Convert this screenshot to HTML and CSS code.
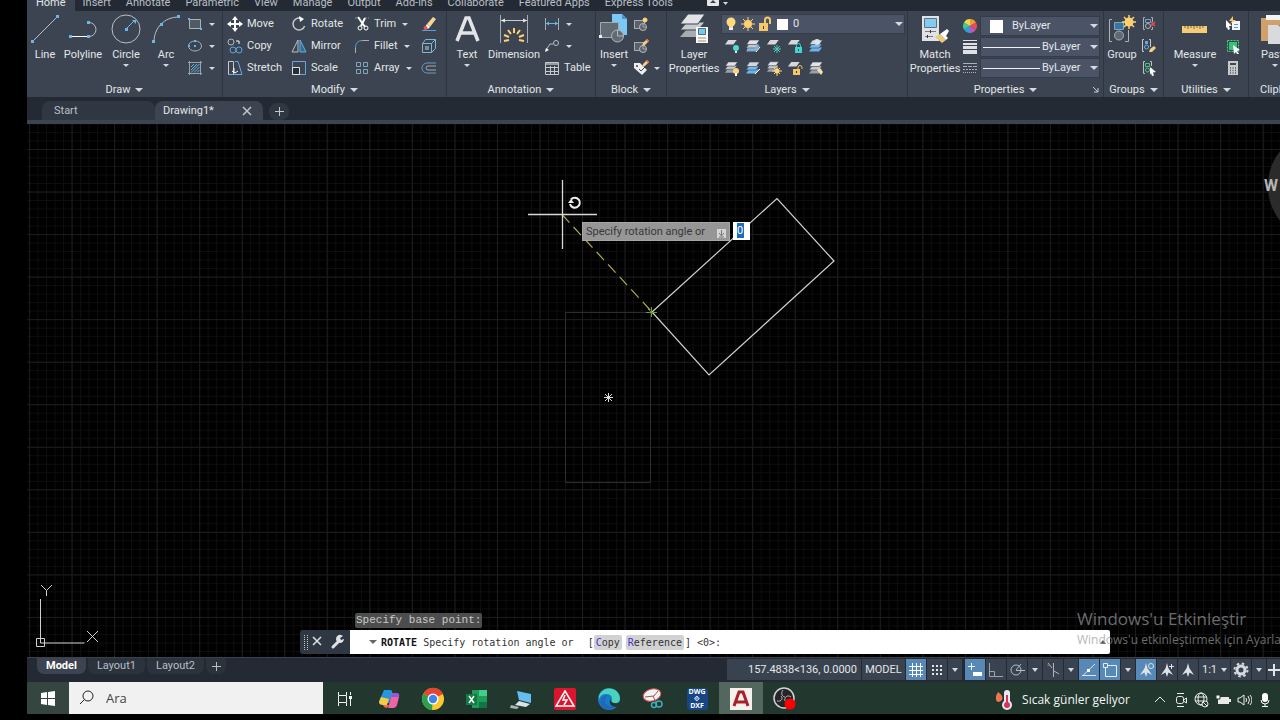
FILE: index.html
```html
<!DOCTYPE html>
<html lang="en">
<head>
<meta charset="utf-8">
<title>Drawing1</title>
<link rel="stylesheet" href="styles.css">
</head>
<body>
<svg class="defs" aria-hidden="true">
  <defs>
    <symbol id="sheets" viewBox="0 0 16 16"><path d="M4 9.500h10l-3 4H1z" fill="#9aa2a9"/><path d="M4 6h10l-3 4H1z" fill="#c3c8cc" stroke="#3b4450" stroke-width=".6"/><path d="M4.500 2h10l-3 4.500h-10z" fill="#e0e2e4" stroke="#3b4450" stroke-width=".6"/></symbol>
    <symbol id="sheet" viewBox="0 0 16 16"><path d="M4.500 2h9l-3.500 5H1z" fill="#d5d8da"/></symbol>
    <symbol id="bluesheets" viewBox="0 0 16 16"><path d="M4 9.500h10l-3 4H1z" fill="#6cb4ea"/><path d="M4 6h10l-3 4H1z" fill="#74baf0" stroke="#3b4450" stroke-width=".6"/><path d="M4.500 2h10l-3 4.500h-10z" fill="#d5d8da" stroke="#3b4450" stroke-width=".6"/></symbol>
    <symbol id="block" viewBox="0 0 16 16"><rect x="1.500" y="4.500" width="10" height="8" fill="#59616a" stroke="#a5abb0"/><circle cx="10" cy="11" r="3.500" fill="#59616a" stroke="#b4b9bd"/><path d="M10 8v3h3" fill="none" stroke="#b4b9bd" stroke-width=".8"/></symbol>
    <symbol id="pencil" viewBox="0 0 8 8"><path d="M1 7l1-3 4-4 2 2-4 4z" fill="#f2cf8a"/><path d="M5 1l1-1 2 2-1 1z" fill="#ee5a4c"/></symbol>
    <symbol id="needle" viewBox="0 0 16 16"><path d="M8 1l1.300 5L14 13l-4.500-2.500L8 15l-1.500-4.500L2 13l4.700-7z" fill="#dfe2e5"/></symbol>
  </defs>
</svg>

<nav class="menu">
  <button class="on">Home</button><button>Insert</button><button>Annotate</button><button>Parametric</button><button>View</button><button>Manage</button><button>Output</button><button>Add-ins</button><button>Collaborate</button><button>Featured Apps</button><button>Express Tools</button>
  <button class="pin" aria-label="Ribbon display"><svg width="32" height="17"><rect x="6" y="3" width="12" height="8" rx="1" fill="#e4e6e8"/><path d="M9 8h6l-3-3z" fill="#39434e"/><path d="M22 7h5l-2.500 3z" fill="#d5d9dd"/></svg></button>
</nav>

<main class="ribbon">
  <section class="panel draw">
    <div class="tools">
      <button class="big"><svg width="32" height="32"><path d="M3 29L29 3" stroke="#b9bec4" fill="none"/><path d="M2 27h3v3H2zM27 2h3v3h-3z" fill="#67b7ea"/></svg>Line</button>
      <button class="big"><svg width="32" height="32"><path d="M3 23.500h19a7 7 0 0 0 0-14" stroke="#b9bec4" fill="none"/><path d="M3 23.500h19" stroke="#fff"/><path d="M2 22h3v3H2zM20 22h3v3h-3zM20 8h3v3h-3z" fill="#67b7ea"/></svg>Polyline</button>
      <button class="big drop"><svg width="32" height="32"><circle cx="16" cy="16" r="14" stroke="#b9bec4" fill="none"/><path d="M16 16l8-8" stroke="#67b7ea"/><path d="M15 15h3v3h-3zM22 7h4v4z" fill="#67b7ea"/></svg>Circle</button>
      <button class="big drop"><svg width="32" height="32"><path d="M4 29C4 15 14 4 29 4" stroke="#b9bec4" fill="none"/><path d="M2 27h3v3H2zM10 10h3v3h-3zM27 2h3v3h-3z" fill="#67b7ea"/></svg>Arc</button>
      <div class="stack">
        <button class="small drop" aria-label="Rectangle"><svg width="16" height="16"><path d="M2.500 3.500h11v9h-11z" stroke="#a9b0b7" fill="#515b66"/><path d="M1 2h2v2H1zM13 12h2v2h-2z" fill="#67b7ea"/></svg></button>
        <button class="small drop" aria-label="Ellipse"><svg width="16" height="16"><ellipse cx="8" cy="8" rx="6.500" ry="5" stroke="#9fb2c2" fill="none"/><path d="M7 7h2v2H7zM7 2h2v2H7zM1 7h2v2H1z" fill="#67b7ea"/></svg></button>
        <button class="small drop" aria-label="Hatch"><svg width="16" height="16"><path d="M1 2.500h14M1 13.500h14M2.500 1v14M13.500 1v14" stroke="#9aa2aa"/><path d="M4 7l3-3M4 10l6-6M4 12.500l8.500-8.500M7 12.500l5.500-5.500M10 12.500l2.500-2.500" stroke="#67b7ea"/></svg></button>
      </div>
    </div>
    <h2 class="more">Draw</h2>
  </section>

  <section class="panel modify">
    <div class="tools grid4">
      <button class="small"><svg width="16" height="16"><path d="M8 1v14M1 8h14" stroke="#fff" stroke-width="2"/><path d="M8 0l3 4H5zM8 16l3-4H5zM0 8l4-3v6zM16 8l-4-3v6z" fill="#fff"/></svg>Move</button>
      <button class="small"><svg width="16" height="16"><path d="M14 8a6 6 0 1 1-6-6" stroke="#c6cbd0" stroke-width="1.500" fill="none" transform="rotate(20 8 8)"/><path d="M8 0l5 3-4 3z" fill="#fff"/></svg>Rotate</button>
      <button class="small drop"><svg width="16" height="16"><path d="M1 2h5M11 2h4" stroke="#8b949d" stroke-dasharray="2 1"/><path d="M4 1l7 10M11 2L7 10" stroke="#fff" stroke-width="2"/><circle cx="6" cy="12" r="2" stroke="#fff" fill="none"/><circle cx="12" cy="12" r="2" stroke="#fff" fill="none"/></svg>Trim</button>
      <button class="small" aria-label="Erase"><svg width="16" height="16"><path d="M1 14.500h14" stroke="#4fa3dc"/><path d="M6 8l6-7 3 2-6 8z" fill="#f7d48f"/><path d="M6 8l3 3-2 2-3-2z" fill="#fff"/><circle cx="4.500" cy="12" r="2" fill="#ef5148"/></svg></button>
      <button class="small"><svg width="16" height="16"><circle cx="4" cy="4" r="3" stroke="#b2b8be" fill="none"/><path d="M9 3h3v3" stroke="#fff" fill="none"/><circle cx="6" cy="12" r="3" stroke="#55a7df" fill="none"/><circle cx="12" cy="12" r="3" stroke="#55a7df" fill="none"/></svg>Copy</button>
      <button class="small"><svg width="16" height="16"><path d="M7 2v12H1z" stroke="#bcc3c9" fill="none"/><path d="M9 2v12h6z" stroke="#62b0e5" fill="#376a8f"/></svg>Mirror</button>
      <button class="small drop"><svg width="16" height="16"><path d="M1.500 15V9M8 2.500h7" stroke="#aab0b6"/><path d="M1.500 10q0-7.500 7-7.500" stroke="#5b9ecb" fill="none"/></svg>Fillet</button>
      <button class="small" aria-label="Explode"><svg width="16" height="16"><path d="M1.500 5.500h9v9h-9zM1.500 5.500l3-4h10v9l-4 4M10.500 5.500l4-4" stroke="#83b5d8" fill="none"/><path d="M4 8h4v4H4z" fill="#7f8a95"/></svg></button>
      <button class="small"><svg width="16" height="16"><path d="M1.500 1.500h5v13h-5z" stroke="#c2c8cd" fill="none"/><path d="M8 1.500h3l4 13H2" stroke="#5eafe6" fill="none"/><path d="M7 8v5M5 11l3 2 3-2" stroke="#fff" fill="none"/></svg>Stretch</button>
      <button class="small"><svg width="16" height="16"><path d="M1.500 1.500h13v13h-13z" stroke="#62a9d8" fill="none"/><path d="M1.500 7.500h7v7h-7z" stroke="#e0e3e6" fill="#252e38"/></svg>Scale</button>
      <button class="small drop"><svg width="16" height="16"><path d="M2.500 2.500h4v4h-4zM9.500 2.500h4v4h-4zM2.500 9.500h4v4h-4zM9.500 9.500h4v4h-4z" stroke="#84a6bd" fill="none"/></svg>Array</button>
      <button class="small" aria-label="Offset"><svg width="16" height="16"><path d="M15 3H6a5 5 0 0 0 0 10h9" stroke="#669bc0" fill="none"/><path d="M15 6H7a2 2 0 0 0 0 4h8" stroke="#a4abb2" fill="none"/></svg></button>
    </div>
    <h2 class="more">Modify</h2>
  </section>

  <section class="panel annotation">
    <div class="tools">
      <button class="big drop"><svg width="32" height="32"><path d="M6 28L15 5h3l9 23M9 20h14" stroke="#e2e4e7" stroke-width="3.500" fill="none"/></svg>Text</button>
      <button class="big"><svg width="32" height="32"><path d="M2.500 2v28M29.500 2v28" stroke="#a5acb3"/><path d="M3 7.500h26" stroke="#c6ccd1"/><path d="M3 7.500l4-2v4zM29 7.500l-4-2v4z" fill="#e5e8eb"/><path d="M16 15v5M10 17l3 4M22 17l-3 4M6 22l5 2M26 22l-5 2M6 28l5-1M26 28l-5-1" stroke="#ffd078" stroke-width="2"/></svg>Dimension</button>
      <div class="stack">
        <button class="small drop" aria-label="Linear"><svg width="16" height="16"><path d="M1.500 2v12M14.500 2v12" stroke="#a5acb3"/><path d="M2 7.500h12" stroke="#69b5e8"/><path d="M2 7.500l3-2v4zM14 7.500l-3-2v4z" fill="#69b5e8"/></svg></button>
        <button class="small drop" aria-label="Leader"><svg width="16" height="16"><circle cx="12" cy="5" r="2.500" stroke="#b7bdc3" fill="none"/><path d="M9 6H6l-4 6" stroke="#b7bdc3" fill="none"/><path d="M1 14l1-4 3 2z" fill="#fff"/></svg></button>
        <button class="small"><svg width="16" height="16"><path d="M1.500 2.500h13v12h-13zM2 7.500h12M2 11.500h12M6.500 6v8M10.500 6v8" stroke="#c5cacf" fill="none"/><path d="M2 3h12v2H2z" fill="#959da5"/></svg>Table</button>
      </div>
    </div>
    <h2 class="more">Annotation</h2>
  </section>

  <section class="panel blocks">
    <div class="tools">
      <button class="big drop"><svg width="32" height="32"><path d="M14 1h10l5 5v16H14z" fill="#7cc7f4"/><path d="M24 1v5h5z" fill="#4598cb"/><path d="M2.500 9.500h18v15h-18z" fill="#626b73" stroke="#a2a9af"/><circle cx="19.500" cy="23" r="6" fill="#626b73" stroke="#b0b6bb"/><path d="M19.500 17v6h6" stroke="#b0b6bb" fill="none"/><path d="M1 22h3v3H1z" fill="#e5f3fb"/></svg>Insert</button>
      <div class="stack">
        <button class="small" aria-label="Create block"><svg width="16" height="16"><use href="#block" width="16" height="16"/><circle cx="12" cy="4" r="2" fill="#ffd77c"/><path d="M12 1v6M9 4h6M10 2l4 4M14 2l-4 4" stroke="#ffd77c" stroke-width=".8"/></svg></button>
        <button class="small" aria-label="Edit block"><svg width="16" height="16"><use href="#block" width="16" height="16"/><use href="#pencil" x="8" y="1" width="8" height="8"/></svg></button>
        <button class="small drop" aria-label="Edit attributes"><svg width="16" height="16"><path d="M1 3h6l7 7-5 5-8-7z" fill="#eceeef"/><circle cx="4" cy="6" r="1" fill="#3b4450"/><path d="M6 9l2 2 4-4" stroke="#3b4450" fill="none"/><use href="#pencil" x="8" width="8" height="8"/></svg></button>
      </div>
    </div>
    <h2 class="more">Block</h2>
  </section>

  <section class="panel layers">
    <div class="tools">
      <button class="big two"><svg width="32" height="32"><path d="M9 16h18l-7 8H2z" fill="#a6acb1"/><path d="M9 9h18l-7 8H2z" fill="#c8cccf" stroke="#3b4450"/><path d="M10 1h17l-7 10H2z" fill="#e2e4e6" stroke="#3b4450"/><path d="M18 14h12v16H18z" fill="#fafafa"/><path d="M20.500 15.500h7v6h-7z" fill="#76c8f4" stroke="#526c7d"/><path d="M20 25h8M20 28h8" stroke="#a28e70"/></svg>Layer<br>Properties</button>
      <div class="stack layerstack">
        <div class="combo layer">
          <svg width="66" height="18"><g fill="#ffd97e"><circle cx="9" cy="7" r="4.500"/><path d="M7 9h4v4H7z"/></g><path d="M7 13h4v2H7z" fill="#e5f3fa"/><circle cx="26" cy="9" r="4" fill="#ffd16d"/><path d="M26 2v14M19 9h14M21 4l10 10M31 4L21 14" stroke="#ffd16d"/><path d="M37 8h9v8h-9z" fill="#f5c86a"/><path d="M43 8V5a2.500 2.500 0 0 1 5 0v4" stroke="#f5c86a" stroke-width="2" fill="none"/><path d="M41 11h1v3h-1z" fill="#55431f"/><path d="M55 4h11v11H55z" fill="#fff"/></svg>
          <select aria-label="Layer"><option>0</option></select>
        </div>
        <div class="icons">
          <button aria-label="Off"><svg width="16" height="16"><use href="#sheet" width="15" height="15"/><circle cx="12" cy="10" r="3" fill="#54d8d0"/><path d="M11 13h2v2h-2z" fill="#d6f3f2"/></svg></button>
          <button aria-label="Isolate"><svg width="16" height="16"><use href="#sheets" width="16" height="16"/><path d="M2 11.500h8l4-4" stroke="#70bcf2" stroke-width="2" fill="none"/><path d="M15 9l-4 5" stroke="#fff"/></svg></button>
          <button aria-label="Freeze"><svg width="16" height="16"><use href="#sheet" width="15" height="15"/><path d="M11 7v8M7 11h8M8 8l6 6M14 8l-6 6" stroke="#4dcdbf"/></svg></button>
          <button aria-label="Lock"><svg width="16" height="16"><use href="#sheet" width="15" height="15"/><path d="M8 9h7v6H8z" fill="#3ed6cf"/><path d="M9.500 9V7.500a2 2 0 0 1 4 0V9" stroke="#3ed6cf" fill="none"/><path d="M11 11h1v2h-1z" fill="#1c5552"/></svg></button>
          <button aria-label="Make current"><svg width="16" height="16"><use href="#bluesheets" width="16" height="16"/><circle cx="9" cy="4" r="3" fill="#d9e3e9"/></svg></button>
        </div>
        <div class="icons">
          <button aria-label="On"><svg width="16" height="16"><use href="#sheets" width="15" height="15"/><circle cx="12" cy="11" r="3" fill="#ffd477"/><path d="M11 13h2v3h-2z" fill="#fff"/></svg></button>
          <button aria-label="Unisolate"><svg width="16" height="16"><use href="#bluesheets" width="16" height="16"/><path d="M10 14l5-5" stroke="#fff"/></svg></button>
          <button aria-label="Thaw"><svg width="16" height="16"><use href="#sheets" width="14" height="14"/><circle cx="11" cy="11" r="2.500" fill="#ffd477"/><path d="M11 6v10M6 11h10M8 8l6 6M14 8l-6 6" stroke="#ffd477"/></svg></button>
          <button aria-label="Unlock"><svg width="16" height="16"><use href="#sheet" width="15" height="15"/><path d="M6 9h7v6H6z" fill="#f3c667"/><path d="M11 9V7.500a2 2 0 0 1 4 0V9" stroke="#f3c667" fill="none"/><path d="M9 11h1v2H9z" fill="#40361d"/></svg></button>
          <button aria-label="Match layer"><svg width="16" height="16"><use href="#sheets" width="16" height="16"/><path d="M9 10l3-2 3 4-2 3z" fill="#f7dfaa"/></svg></button>
        </div>
      </div>
    </div>
    <h2 class="more">Layers</h2>
  </section>

  <section class="panel props">
    <div class="tools">
      <button class="big two"><svg width="32" height="32"><path d="M3 3h17v25H3z" fill="#e0e3e5"/><path d="M5.500 5.500h12v9h-12z" fill="#83ccf1" stroke="#5c747f"/><path d="M6 18.500h11M6 23.500h8" stroke="#757b80"/><path d="M11.500 17v3M8.500 22v3" stroke="#333"/><path d="M16 24l5-3 6 6-4 3z" fill="#ebc878"/><path d="M21 21l7-5 2 2-3 5 2 2-2 2z" fill="#fff"/></svg>Match<br>Properties</button>
      <div class="proprows">
        <svg width="16" height="16"><g stroke-width="7" fill="none"><path d="M8 4.500A3.500 3.500 0 0 1 11 6.200" stroke="#f39a38"/><path d="M11 6.200A3.500 3.500 0 0 1 11 9.800" stroke="#ed4c4f"/><path d="M11 9.800A3.500 3.500 0 0 1 8 11.500" stroke="#b759bd"/><path d="M8 11.500A3.500 3.500 0 0 1 5 9.800" stroke="#3b98e6"/><path d="M5 9.800A3.500 3.500 0 0 1 5 6.200" stroke="#3fc99a"/><path d="M5 6.200A3.500 3.500 0 0 1 8 4.500" stroke="#efd84d"/></g></svg>
        <label class="combo swatch"><i></i><select aria-label="Color"><option>ByLayer</option></select></label>
        <svg width="16" height="16"><path d="M1 1.500h14" stroke="#dfe2e4"/><path d="M1 5h14" stroke="#dfe2e4" stroke-width="2"/><path d="M1 8.500h14" stroke="#dfe2e4" stroke-width="3"/><path d="M1 13h14" stroke="#dfe2e4" stroke-width="4"/></svg>
        <label class="combo rule"><i></i><select aria-label="Lineweight"><option>ByLayer</option></select></label>
        <svg width="16" height="16"><path d="M1 3.500h14" stroke="#a9b0b6"/><path d="M1 6.500h14" stroke="#a9b0b6" stroke-dasharray="4 1"/><path d="M1 9.500h14" stroke="#a9b0b6" stroke-dasharray="2 1"/><path d="M1 12.500h14" stroke="#a9b0b6" stroke-dasharray="1 1"/></svg>
        <label class="combo rule"><i></i><select aria-label="Linetype"><option>ByLayer</option></select></label>
      </div>
    </div>
    <h2 class="more">Properties<svg class="launcher" width="8" height="8"><path d="M1 1l5 5M6 2v4H2" stroke="#c9ced3" fill="none"/></svg></h2>
  </section>

  <section class="panel groups">
    <div class="tools">
      <button class="big"><svg width="32" height="32"><path d="M6 6.500H3.500v22H6M19 28.500h3.500V17" stroke="#aab1b8" fill="none"/><path d="M8.500 9.500h9v7h-9z" fill="#3c729b" stroke="#73a9cb"/><circle cx="13" cy="22.500" r="4.500" fill="#606971" stroke="#aab0b5"/><circle cx="23" cy="9" r="4.500" fill="#ffd071"/><path d="M23 2v14M16 9h14M18 4l10 10M28 4L18 14" stroke="#ffd071" stroke-width="1.500"/></svg>Group</button>
      <div class="stack">
        <button class="small" aria-label="Ungroup"><svg width="16" height="16"><path d="M4 1.500H2.500v12H4M10 1.500h1.500V6M11.500 11v2.500H10" stroke="#a7aeb5" fill="none"/><path d="M4.500 3.500h5v3h-5z" stroke="#64a8d7" fill="none"/><circle cx="7" cy="10" r="2.500" stroke="#b2b8bd" fill="none"/><path d="M10 6l4 4M14 6l-4 4" stroke="#ef4a4e" stroke-width="1.500"/></svg></button>
        <button class="small" aria-label="Group edit"><svg width="16" height="16"><path d="M3 1.500H1.500v12H3M8 1.500h1.500V9" stroke="#c3cbd2" fill="none"/><path d="M4 3h3v3H4z" fill="#5eaadf"/><circle cx="5.500" cy="9" r="2" stroke="#6bb3e5" fill="none"/><path d="M8 14l1-3 4-3 2 2-4 4z" fill="#f3cf83"/></svg></button>
        <button class="small" aria-label="Group selection"><svg width="16" height="16"><path d="M4 1.500H2.500v12H4M9 1.500h1.500V6" stroke="#b9c0c7" fill="none"/><path d="M4.500 3.500h4v3h-4z" stroke="#42c979" fill="none"/><circle cx="6.500" cy="10" r="2" stroke="#42c979" fill="none"/><path d="M9 7l6 5-3 .5 1 3-2 .5-1-3-1 2z" fill="#fff"/></svg></button>
      </div>
    </div>
    <h2 class="more">Groups</h2>
  </section>

  <section class="panel utils">
    <div class="tools">
      <button class="big drop"><svg width="32" height="32"><path d="M3 13h25v7H3z" fill="#f5cd76"/><path d="M6 13v2M9 13v3M12 13v2M15 13v3M18 13v2M21 13v3M24 13v2" stroke="#7c643b"/></svg>Measure</button>
      <div class="stack">
        <button class="small" aria-label="Quick select"><svg width="16" height="16"><path d="M7 5h8v9H7z" fill="#f3f6f8"/><path d="M9 8.500h4M9 11.500h4" stroke="#549bc9"/><path d="M8 0L4 5h3L5 8l6-4H8z" fill="#ffc566"/><path d="M1 4l6 6H4l1 3-2 1-1-3-1 1z" fill="#fff"/></svg></button>
        <button class="small" aria-label="Select all"><svg width="16" height="16"><path d="M2.500 2.500h11v11h-11z" stroke="#46cf80" stroke-dasharray="2 1" fill="none"/><path d="M4 4h8v8H4z" fill="#36c373"/><path d="M8 7l7 5-3 1 2 3h-2l-1-2-2 2z" fill="#fff"/></svg></button>
        <button class="small" aria-label="Calculator"><svg width="16" height="16"><path d="M3 1h10v14H3z" fill="#c8cbcd"/><path d="M5 3h6v2H5z" fill="#42484e"/><path d="M5 8h1M7.500 8h1M10 8h1M5 10.500h1M7.500 10.500h1M10 10.500h1M5 13h1M7.500 13h1M10 13h1" stroke="#50565b" stroke-width="1.500"/></svg></button>
      </div>
    </div>
    <h2 class="more">Utilities</h2>
  </section>

  <section class="panel clip">
    <div class="tools">
      <button class="big drop"><svg width="32" height="32"><path d="M2 5h24v23H2z" fill="#cfa06a"/><path d="M7 2h14v5H7z" fill="#f5f5f5"/><path d="M9 12h20v19H9z" fill="#d9dadd"/><path d="M19 12h6v6z" fill="#80868b"/></svg>Paste</button>
    </div>
    <h2>Clipboard</h2>
  </section>
</main>

<nav class="files">
  <button class="file start">Start</button>
  <button class="file current">Drawing1*<svg width="10" height="10"><path d="M1 1l8 8M9 1L1 9" stroke="#c2c7cc" stroke-width="1.500"/></svg></button>
  <button class="plus" aria-label="New drawing"><svg width="9" height="9"><path d="M4.500 0v9M0 4.500h9" stroke="#c2c7cc"/></svg></button>
</nav>

<section class="model">
  <svg class="scene">
    <defs>
      <pattern id="minor" x="29" y="149" width="8.508" height="8.508" patternUnits="userSpaceOnUse"><path d="M.5 0v9M0 .5h9" stroke="#0e0e10"/></pattern>
      <pattern id="major" x="29" y="149" width="42.540" height="42.540" patternUnits="userSpaceOnUse"><path d="M.5 0v43M0 .5h43" stroke="#1c1c20"/></pattern>
    </defs>
    <g transform="translate(-27 -124)" fill="none">
      <rect width="100%" height="100%" x="27" y="124" fill="url(#minor)"/>
      <rect width="100%" height="100%" x="27" y="124" fill="url(#major)"/>
      <path d="M565.500 312.500h85v170h-85z" stroke="#2d2d2a"/>
      <path d="M652 312L777 198.500 834 261 709 375z" stroke="#d0d0d0" stroke-width="1.200"/>
      <path d="M562 214.500L652 312" stroke="#b0a94c" stroke-width="1.200" stroke-dasharray="11 6"/>
      <path d="M646 312.500h11M651.500 307v10M648 309l7 7" stroke="#6f9b36"/>
      <path d="M528 214.500h69M562.500 180v69" stroke="#d9d9d2" stroke-width="1.300"/>
      <path d="M570 204a5 5 0 1 0 1-4.500" stroke="#eee" stroke-width="2"/><path d="M568 203h6l-3-4z" fill="#eee"/>
      <path d="M604 397.500h9M608.500 393v9M605 394l7 7M612 394l-7 7" stroke="#ddd"/>
      <path d="M40.500 599v44h44M36.500 638.500h8v8h-8zM87 631l11 11M98 631l-11 11M41 585l5.500 5.500 5.500-5.500M46.500 590.500v5.500" stroke="#d3d0ca"/>
      <circle cx="1324" cy="186" r="50" stroke="#2b2b2b" stroke-width="12"/>
    </g>
  </svg>
  <b class="west">W</b>
  <div class="prompt">
    <label for="angle">Specify rotation angle or<svg width="9" height="9"><path d="M0 0h9v9H0z" fill="#d5d5d5"/><path d="M4.500 1v5M2 4l2.500 3L7 4M2 8h5" stroke="#777" fill="none"/></svg></label>
    <span class="angle"><input id="angle" value="0"></span>
  </div>
  <div class="history">Specify base point:</div>
  <div class="command">
    <div class="handle">
      <svg width="50" height="24"><path d="M4.500 5v15M7.500 5v15" stroke="#c5cad0" stroke-dasharray="1 1"/><path d="M13 7l8 8M21 7l-8 8" stroke="#e0e3e5" stroke-width="1.500"/><path d="M33 17l6-6" stroke="#e0e3e5" stroke-width="3" stroke-linecap="round"/><path d="M43 6l-3 2 1 2 3-1a4 4 0 1 1-3-4z" fill="#e0e3e5"/></svg>
    </div>
    <div class="line"><i class="tri"></i><b>ROTATE</b><span class="ask">Specify rotation angle or</span>[<button><em>C</em>opy</button><button><em>R</em>eference</button>]<span class="def">&lt;0&gt;:</span><i class="up"></i></div>
  </div>
  <div class="activate"><strong>Windows'u Etkinleştir</strong><span>Windows'u etkinleştirmek için Ayarlar'a gidin.</span></div>
</section>

<footer class="bar">
  <nav class="layouts"><button class="on">Model</button><button>Layout1</button><button>Layout2</button><button class="add" aria-label="New layout"><svg width="9" height="9"><path d="M4.500 0v9M0 4.500h9" stroke="#b9bfc6"/></svg></button></nav>
  <div class="status">
    <span class="coords">157.4838&lt;136, 0.0000</span>
    <button class="space">MODEL</button>
    <button class="lit" aria-label="Grid"><svg width="16" height="16"><path d="M1 4.500h14M1 8.500h14M1 12.500h14M4.500 1v14M8.500 1v14M12.500 1v14" stroke="#fff"/></svg></button>
    <button aria-label="Snap"><svg width="16" height="16"><path d="M3 4h10M3 8h10M3 12h10" stroke="#e3e5e8" stroke-width="2" stroke-dasharray="2 2"/></svg></button>
    <button class="dd" aria-label="Snap options"></button>
    <button class="lit sep" aria-label="Dynamic input"><svg width="16" height="16"><path d="M4.500 1v7M1 4.500h7" stroke="#e7f4fc"/><path d="M6 10h9v4H6z" fill="#fff"/></svg></button>
    <button aria-label="Ortho"><svg width="16" height="16"><path d="M1.500 1v13.500H15M1.500 9.500h5v5" stroke="#9aa3ac" fill="none"/></svg></button>
    <button aria-label="Polar"><svg width="16" height="16"><circle cx="7" cy="8" r="5" stroke="#b4bbc2" fill="none"/><path d="M7 8.500h9M7 8l5-6" stroke="#b4bbc2"/></svg></button>
    <button class="dd" aria-label="Polar options"></button>
    <button aria-label="Isodraft"><svg width="16" height="16"><path d="M3 1l4 5M8.500 1v14M9 9l5 3" stroke="#aeb4bb"/><path d="M2 3l3 1" stroke="#a9575b"/></svg></button>
    <button class="dd" aria-label="Isodraft options"></button>
    <button class="lit" aria-label="Object snap tracking"><svg width="16" height="16"><path d="M1 13.500h14M2 13.500L14 2" stroke="#d8e6f0"/><path d="M6 7h3v3H6z" fill="#fff"/></svg></button>
    <button class="lit" aria-label="Object snap"><svg width="16" height="16"><path d="M3.500 3.500h11v11h-11z" stroke="#e2edf4" fill="none"/><path d="M1.500 1.500h4v4h-4z" stroke="#e2edf4" fill="#5684ad"/></svg></button>
    <button class="dd" aria-label="Object snap options"></button>
    <button class="lit" aria-label="Annotation visibility"><svg width="16" height="16"><use href="#needle" width="16" height="16"/><circle cx="13" cy="4" r="2.500" stroke="#cfe2ef" fill="none"/></svg></button>
    <button aria-label="Autoscale"><svg width="16" height="16"><use href="#needle" width="16" height="16"/><path d="M12.500 2v5M10 4.500h5" stroke="#dfe2e5"/></svg></button>
    <button aria-label="Annotation scale"><svg width="16" height="16"><use href="#needle" width="16" height="16"/></svg></button>
    <button class="ratio">1:1</button>
    <button aria-label="Workspace"><svg width="16" height="16"><circle cx="8" cy="8" r="4" stroke="#d8dbde" stroke-width="3" fill="none"/><circle cx="8" cy="8" r="6.500" stroke="#d8dbde" stroke-width="2" stroke-dasharray="2.500 2.600" fill="none"/></svg></button>
    <button class="dd" aria-label="Workspace options"></button>
    <button class="last" aria-label="Monitor"><svg width="12" height="16"><path d="M6 2v12M0 8h12" stroke="#e2e5e7" stroke-width="2"/></svg></button>
  </div>
</footer>

<footer class="taskbar">
  <button class="win" aria-label="Start menu"><svg width="16" height="16"><path d="M1 3l6-1v6H1zM8 2l7-1v7H8zM1 9h6v6l-6-1zM8 9h7v7l-7-1z" fill="#fff"/></svg></button>
  <label class="search"><svg width="18" height="18"><circle cx="10" cy="7" r="5" stroke="#222" fill="none"/><path d="M6.500 10.500L2 15" stroke="#222"/></svg><input placeholder="Ara" aria-label="Ara"></label>
  <div class="apps">
    <button aria-label="Task view"><svg width="24" height="24"><path d="M5.500 8.500h8v7h-8zM5.500 5v3M13.500 5v3M5.500 16v3M13.500 16v3M17.500 5v3M17.500 12v7" stroke="#f0f3f1" fill="none"/><path d="M16 9h3v3h-3z" fill="#f0f3f1"/></svg></button>
    <button aria-label="Copilot"><svg width="24" height="24"><path d="M7 3h6q3 0 2 4l-3 9H4q-3 0-1-4z" fill="#2697df"/><path d="M4 10L2 15q0 3 4 3h4l2-6z" fill="#f6cc42"/><path d="M15 6h4q4 0 3 4l-2 8q-1 3-4 3h-5z" fill="#ee64a5"/><path d="M15 6h4q4 0 3 4h-8z" fill="#9255e4"/><path d="M6 18h6l-2 3q-3 0-4-3z" fill="#ed6d48"/></svg></button>
    <button aria-label="Chrome"><svg width="24" height="24"><circle cx="12" cy="12" r="11" fill="#fbc92f"/><path d="M12 12L2.500 6.500A11 11 0 0 1 22 7z" fill="#e64435"/><path d="M12 12L2.500 6.500A11 11 0 0 0 11 23z" fill="#2b9f4b"/><circle cx="12" cy="12" r="5.500" fill="#fff"/><circle cx="12" cy="12" r="4.200" fill="#3e86ee"/></svg></button>
    <button aria-label="Excel"><svg width="24" height="24"><path d="M7 3h15v18H7z" fill="#1e9c58"/><path d="M14 3h8v6h-8z" fill="#42cd8c"/><path d="M14 15h8v6h-8z" fill="#127344"/><path d="M1 7h11v11H1z" fill="#127c45"/><path d="M4 9l5 7M9 9l-5 7" stroke="#fff" stroke-width="1.500"/></svg></button>
    <button aria-label="Remote"><svg width="24" height="24"><path d="M8 4l14 3v9L10 13z" fill="#65beef"/><path d="M10 14l11 3-4 3-11-2z" fill="#dce2e5"/><path d="M2 18l8 2-2 2-7-1z" fill="#aab3b7"/></svg></button>
    <button aria-label="Electric"><svg width="24" height="24"><rect x="1" y="1" width="22" height="22" rx="2" fill="#dd142d"/><path d="M12 4l9 15H3z" stroke="#fff" stroke-width="1.500" fill="none"/><path d="M12 8l-2 5h4l-3 5" stroke="#fff" stroke-width="1.500" fill="none"/></svg></button>
    <button aria-label="Edge"><svg width="24" height="24"><circle cx="12" cy="12" r="11" fill="#167dcb"/><path d="M2 9C5-2 23-1 23 12q-1 5-7 4-2-1-1-4 0-5-6-5-5 0-7 5z" fill="#4bd2ba"/><path d="M9 11q-4 8 9 9Q7 27 3 15q1-6 8-7-2 1-2 3z" fill="#2367bd"/><path d="M14 11q-2 6 7 5l2-1q0 4-4 5-9-1-5-9z" fill="#22382f"/></svg></button>
    <button aria-label="Snipping"><svg width="24" height="24"><ellipse cx="11" cy="8" rx="9" ry="6" fill="#f1f2f2" stroke="#d65355" transform="rotate(-15 11 8)"/><path d="M4 10l9-1 4-5M12 9l3 7" stroke="#99585b" fill="none"/><circle cx="13" cy="18" r="2.500" stroke="#43aabd" stroke-width="1.500" fill="none"/><circle cx="18" cy="17" r="3" stroke="#43aabd" stroke-width="1.500" fill="none"/></svg></button>
    <button class="dwg" aria-label="DWG to DXF"><span>DWG<br>⟐<br>DXF</span></button>
    <button class="active" aria-label="AutoCAD"><svg width="24" height="24"><path d="M1 1h22v22H1z" fill="#f7f1ed"/><path d="M5 19L10 5h4l5 14M7 15h10" stroke="#a7202c" stroke-width="3" fill="none"/></svg></button>
    <button aria-label="OBS"><svg width="24" height="24"><circle cx="11" cy="11" r="10" fill="#252529" stroke="#d2d3d4" stroke-width="1.500"/><path d="M10 3c-3 4 0 7 2 7M18 10c-4-3-7 1-6 4M4 14c5 1 6-3 4-5" stroke="#b5b6b9" fill="none"/><circle cx="17" cy="17" r="5.500" fill="#f00"/></svg></button>
  </div>
  <div class="tray">
    <svg width="20" height="24"><path d="M2 8q1-2 2-4 6 4 4 8-4 4-6 0z" fill="#f2764b"/><rect x="10" y="2" width="6" height="14" rx="3" fill="#e8e9f2"/><circle cx="13" cy="17" r="5" fill="#e8e9f2"/><circle cx="13" cy="17" r="3" fill="#dc315b"/><path d="M13 7v10" stroke="#dc315b" stroke-width="2"/></svg>
    <span>Sıcak günler geliyor</span>
    <button aria-label="Show hidden"><svg width="16" height="16"><path d="M3 10l5-5 5 5" stroke="#eee" fill="none"/></svg></button>
    <button aria-label="Meet now"><svg width="16" height="16"><rect x="3.500" y="4.500" width="7" height="7" rx="2" stroke="#eee" fill="none"/><path d="M10.500 8l3-2v5l-3-2M4 1.500h7M4 14.500h7" stroke="#eee" fill="none"/></svg></button>
    <button aria-label="Network"><svg width="16" height="16"><circle cx="7" cy="7" r="6" stroke="#eee" fill="none"/><ellipse cx="7" cy="7" rx="3" ry="6" stroke="#eee" fill="none"/><path d="M1 5h12M1 9h9" stroke="#eee"/><circle cx="11" cy="12" r="3" stroke="#eee" fill="#22382f"/><path d="M9 10l4 4" stroke="#eee"/></svg></button>
    <button aria-label="Battery"><svg width="16" height="16"><path d="M3 5h11v7H3z" fill="#e9e9e9"/><path d="M14 7h2v3h-2z" fill="#e9e9e9"/><path d="M1 3h4v4H1z" fill="#fff" stroke="#22382f"/></svg></button>
    <button aria-label="Volume"><svg width="16" height="16"><path d="M2 6h2l4-3v10l-4-3H2zM10 6q1 2 0 4M12 4q3 4 0 8M14 3q4 5 0 10" stroke="#eee" fill="none"/></svg></button>
    <button aria-label="Microphone"><svg width="16" height="16"><rect x="5" y="1" width="6" height="9" rx="3" fill="#fff"/><path d="M4 8q0 4 4 4t4-4M8 12v3M5 14.500h6" stroke="#fff" fill="none"/></svg></button>
  </div>
</footer>
</body>
</html>
```

FILE: styles.css
```css
* { box-sizing: border-box; }
body {
  margin: 0;
  height: 100vh;
  padding: 0 0 6px 27px;
  display: flex;
  flex-direction: column;
  overflow: hidden;
  background: #000;
  color: #e3e6e9;
  font: 11px/16px Roboto, "Open Sans", sans-serif;
}
.defs { position: absolute; width: 0; height: 0; }
svg { flex: none; display: block; }
button {
  margin: 0; padding: 0; border: 0;
  background: none; color: inherit; font: inherit;
  white-space: nowrap;
}
h2 { margin: 0; font: inherit; }
select, input { font: inherit; color: inherit; border: 0; margin: 0; }

.menu {
  flex: none; height: 11px;
  display: flex; align-items: flex-end; gap: 1px;
  background: #232a34; color: #b9bfc6;
}
.menu button { height: 16px; padding: 0 7px; line-height: 16px; }
.menu .on { background: #3b4450; color: #e3e6e9; padding: 0 9px; }
.menu .pin { margin-left: 13px; }

.ribbon {
  flex: none; height: 86px;
  display: flex;
  overflow: hidden;
  background: #3b4450;
}
.panel {
  flex: none;
  display: flex; flex-direction: column;
  border-right: 1px solid #2d3640;
}
.panel h2 {
  position: relative;
  display: flex; justify-content: center; align-items: center;
  gap: 5px; height: 15px;
}
.more::after, .tri {
  content: "";
  border: 4px solid transparent;
  border-top-color: #d5d9dd;
  border-bottom: 0;
}
.draw { width: 196px; }
.modify { width: 224px; }
.annotation { width: 149px; }
.blocks { width: 71px; }
.layers { width: 241px; }
.props { width: 196px; }
.groups { width: 60px; }
.utils { width: 85px; }
.clip { width: 60px; }
.clip h2 { justify-content: flex-start; padding-left: 11px; }

.tools { flex: 1; display: flex; padding: 2px 1px; }
.big {
  display: flex; flex-direction: column; align-items: center;
  flex: 1 1 auto; line-height: 14px;
}
.big svg { margin-bottom: 3px; }
.draw .big { flex: 0 0 34px; }
.draw .big:nth-child(2) { flex-basis: 42px; }
.draw .big:nth-child(3) { flex-basis: 44px; }
.draw .big:nth-child(4) { flex-basis: 36px; }
.draw .stack { padding-left: 3px; }
.annotation .big { flex: 0 0 38px; }
.annotation .big + .big { flex-basis: 56px; }
.blocks .big { flex: 0 0 34px; }
.layers .big, .props .big { flex: 0 0 52px; }
.props .big { margin-right: 1px; }
.groups .big { flex: 0 0 34px; }
.utils .big { flex: 0 0 60px; }
.clip .big { flex: 0 0 50px; }
.big.drop::after {
  content: "";
  margin-top: 2px;
  border: 3px solid transparent;
  border-top-color: #d5d9dd;
  border-bottom: 0;
}
.stack { display: flex; flex-direction: column; }
.small {
  display: flex; align-items: center;
  gap: 4px; height: 22px;
}
.small.drop::after {
  content: "";
  margin-left: 2px;
  border: 3px solid transparent;
  border-top-color: #d5d9dd;
  border-bottom: 0;
}
.grid4 {
  display: grid;
  grid-template: repeat(3, 22px) / 64px 63px 67px 16px;
  padding-left: 4px;
}
.annotation .stack, .groups .stack { padding-left: 2px; }
.blocks .stack { padding-left: 2px; }
.blocks .small.drop { gap: 3px; }

.combo {
  display: flex; align-items: center;
  background: #4a5466;
  border: 1px solid #333c48;
}
.combo select {
  flex: 1; min-width: 0;
  height: 16px; padding: 0;
  appearance: none; background: none; outline: 0;
  line-height: 16px;
}
.combo::after {
  content: "";
  margin-right: 1px;
  border: 4px solid transparent;
  border-top-color: #d5d9dd;
  border-bottom: 0;
}
.layerstack { flex: 1; padding: 1px 1px 0; gap: 2px; }
.layer { height: 20px; gap: 5px; }
.icons { display: flex; gap: 5px; height: 20px; padding-left: 3px; align-items: center; }
.proprows {
  flex: 1;
  display: grid;
  grid-template-columns: 16px 1fr;
  grid-auto-rows: 20px;
  gap: 1px 2px;
  padding: 3px 2px 0 0;
  align-items: center;
}
.proprows .combo { height: 20px; }
.swatch { gap: 9px; padding-left: 9px; }
.swatch i { width: 13px; height: 13px; background: #fff; }
.rule { gap: 2px; padding-left: 2px; }
.rule i { width: 57px; height: 1px; background: #f2f3f4; }
.launcher { position: absolute; right: 3px; top: 4px; }

.files {
  flex: none; height: 27px;
  display: flex; align-items: flex-end;
  padding-left: 15px;
  background: #232a34;
  border-bottom: 4px solid #3b4450;
}
.file {
  height: 19px; padding: 1px 12px 0;
  text-align: left;
  border-radius: 8px 8px 0 0;
  background: #2f3842; color: #b9bfc6;
}
.start { width: 113px; }
.current {
  width: 108px; padding: 1px 11px 0 8px;
  display: flex; align-items: center; justify-content: space-between;
  background: #3b4450; color: #e3e6e9;
}
.plus {
  width: 20px; height: 17px; margin: 0 0 0 6px;
  display: grid; place-items: center;
  border-radius: 8px; background: #2f3842;
}

.model { position: relative; flex: 1; min-height: 0; overflow: hidden; }
.scene { width: 100%; height: 100%; }
.west {
  position: absolute; right: 2px; top: 54px;
  color: #b5b5b5; font-size: 16px;
}
.prompt {
  position: absolute; left: 555px; top: 98px;
  display: flex; gap: 3px;
  color: #38383a;
}
.prompt label {
  display: flex; align-items: center; justify-content: space-between;
  width: 148px; height: 19px; padding: 0 3px;
  background: #969696; border: 1px solid #a6a6a6;
}
.prompt svg { align-self: flex-end; margin-bottom: 2px; }
.angle { width: 17px; height: 18px; padding: 1px 4px; background: #fff; }
.angle input { display: block; width: 7px; height: 15px; padding: 0; background: #1c6dbb; color: #fff; }
.history {
  position: absolute; left: 328px; bottom: 29px;
  padding: 0 1px; border-radius: 2px;
  background: #4d4d4d; color: #c9c9c9;
  font: 11px/15px "Liberation Mono", monospace;
}
.command {
  position: absolute; left: 273px; right: 170px; bottom: 3px;
  height: 24px; display: flex;
  color: #333;
  font: 10px/15px "DejaVu Sans Mono", monospace;
}
.handle { width: 50px; background: #2f3842; border-radius: 3px 0 0 3px; }
.line {
  flex: 1; display: flex; align-items: center;
  padding: 0 4px 0 19px;
  background: #fff; border-radius: 0 2px 2px 0;
}
.line .tri { border-top-color: #666; }
.line b { margin: 0 6px 0 4px; color: #111; }
.ask { margin-right: 14px; }
.line button { background: #d2d2d2; border-radius: 2px; padding: 0 2px; margin-right: 4px; height: 15px; }
.line button + button { margin-right: 1px; }
.line em { font-style: normal; color: #4035d6; }
.def { margin-left: 6px; }
.up { margin-left: auto; border: 3px solid transparent; border-bottom: 4px solid #555; border-top: 0; }
.activate {
  position: absolute; left: 1050px; bottom: 8px;
  display: flex; flex-direction: column; gap: 1px;
  color: rgba(150, 150, 150, .72);
  font: 12px/18px "Open Sans", sans-serif;
  white-space: nowrap;
}
.activate strong { font-weight: 400; font-size: 17px; line-height: 22px; }

.bar {
  flex: none; height: 25px;
  display: flex; justify-content: space-between;
  background: #232a34;
  border-top: 1px solid #39424d;
}
.layouts { display: flex; padding-left: 10px; gap: 2px; color: #b9bfc6; }
.layouts button { height: 16px; padding: 0 9px; background: #2b333d; border-radius: 0 0 7px 7px; }
.layouts .on { background: #3b4450; color: #fff; font-weight: 700; }
.layouts .add { width: 20px; padding: 0; display: grid; place-items: center; }
.status { display: flex; gap: 1px; height: 22px; padding-top: 1px; }
.status > * {
  flex: none; width: 20px;
  display: flex; align-items: center; justify-content: center;
  background: #39434f;
}
.status .coords { width: 134px; justify-content: flex-end; padding-right: 4px; }
.status .space { width: 43px; }
.status .lit { background: #5888b5; }
.status .sep { margin-left: 2px; }
.status .dd { width: 14px; }
.status .dd::after, .ratio::after {
  content: "";
  border: 3px solid transparent;
  border-top: 4px solid #d5d9dd;
  border-bottom: 0;
}
.status .ratio { width: 31px; gap: 4px; }
.status .last { width: 13px; }

.taskbar {
  flex: none; height: 32px;
  display: flex; align-items: stretch;
  background: #22382f; color: #f2f4f3;
  font-family: "Open Sans", sans-serif;
}
.win { width: 42px; display: grid; place-items: center; background: #34463f; }
.search {
  width: 254px; padding-left: 9px;
  display: flex; align-items: center; gap: 8px;
  background: #f1f1f1; color: #333;
  font-size: 13px;
}
.search input { flex: 1; min-width: 0; background: none; outline: 0; }
.search input::placeholder { color: #444; opacity: 1; }
.apps { display: flex; }
.apps button { width: 44px; padding-top: 2px; display: grid; place-items: center; }
.apps .active { background: #53675e; }
.dwg span {
  width: 21px; height: 22px; border-radius: 3px;
  background: #164685; color: #fff;
  font-size: 7px; line-height: 7px; font-weight: 700;
}
.tray { margin-left: auto; display: flex; align-items: center; padding: 3px 5px 0 0; font-size: 12px; }
.tray span { margin: 0 19px 0 8px; }
.tray button { width: 21px; display: grid; place-items: center; }
```
